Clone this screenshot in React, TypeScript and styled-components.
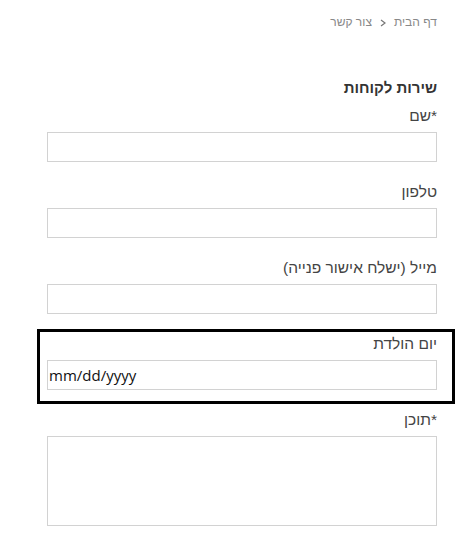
import React from 'react';
import styled, { createGlobalStyle } from 'styled-components';

const GlobalStyle = createGlobalStyle`
  html, body {
    margin: 0;
    padding: 0;
    background: #fff;
  }
  body {
    font-family: 'Liberation Sans', 'DejaVu Sans', Arial, sans-serif;
  }
`;

const Page = styled.div`
  direction: rtl;
  width: 463px;
  box-sizing: border-box;
  padding: 14px 26px 0 47px;
`;

const Breadcrumb = styled.nav`
  display: flex;
  align-items: center;
  font-size: 12px;
  line-height: 16px;
  color: #888;
`;

const Crumb = styled.span`
  white-space: nowrap;
`;

const Separator = styled.svg`
  display: block;
  width: 6px;
  height: 8px;
  margin: 1px 8px 0;
`;

const Heading = styled.h2`
  margin: 48px 0 8px;
  font-size: 15px;
  line-height: 20px;
  font-weight: bold;
  color: #333;
`;

const Form = styled.form`
  display: flex;
  flex-direction: column;
`;

const Field = styled.div<{ $last?: boolean }>`
  display: flex;
  flex-direction: column;
  margin-bottom: ${(p) => (p.$last ? '0' : '20px')};
`;

const Label = styled.label`
  font-size: 15.5px;
  line-height: 20px;
  color: #444;
  margin-bottom: 6px;
`;

const Input = styled.input`
  box-sizing: border-box;
  width: 100%;
  height: 30px;
  margin: 0;
  border: 1px solid #d2d2d2;
  background: #fff;
  padding: 0 1px;
  font-family: 'Open Sans', 'DejaVu Sans', sans-serif;
  font-size: 15px;
  color: #111;
  outline: none;

  &[data-ltr='true'] {
    direction: ltr;
    text-align: left;
  }
`;

const TextArea = styled.textarea`
  box-sizing: border-box;
  width: 100%;
  height: 90px;
  margin: 0;
  border: 1px solid #d2d2d2;
  resize: none;
  outline: none;
  font-family: inherit;
  font-size: 14px;
`;

const Highlight = styled.div`
  margin: -5px -18px 6px -10px;
  border: 3px solid #000;
  padding: 2px 15px 11px 7px;
`;

export default function App() {
  return (
    <>
      <GlobalStyle />
      <Page>
        <Breadcrumb>
          <Crumb>דף הבית</Crumb>
          <Separator viewBox="0 0 6 8" aria-hidden="true">
            <polyline points="1,1 5,4 1,7" fill="none" stroke="#777" strokeWidth="1.2" />
          </Separator>
          <Crumb>צור קשר</Crumb>
        </Breadcrumb>
        <Heading>שירות לקוחות</Heading>
        <Form>
          <Field>
            <Label>*שם</Label>
            <Input type="text" />
          </Field>
          <Field>
            <Label>טלפון</Label>
            <Input type="tel" />
          </Field>
          <Field>
            <Label>מייל (ישלח אישור פנייה)</Label>
            <Input type="email" />
          </Field>
          <Highlight>
            <Field $last>
              <Label>יום הולדת</Label>
              <Input type="text" data-ltr="true" defaultValue="mm/dd/yyyy" readOnly />
            </Field>
          </Highlight>
          <Field $last>
            <Label>*תוכן</Label>
            <TextArea />
          </Field>
        </Form>
      </Page>
    </>
  );
}
